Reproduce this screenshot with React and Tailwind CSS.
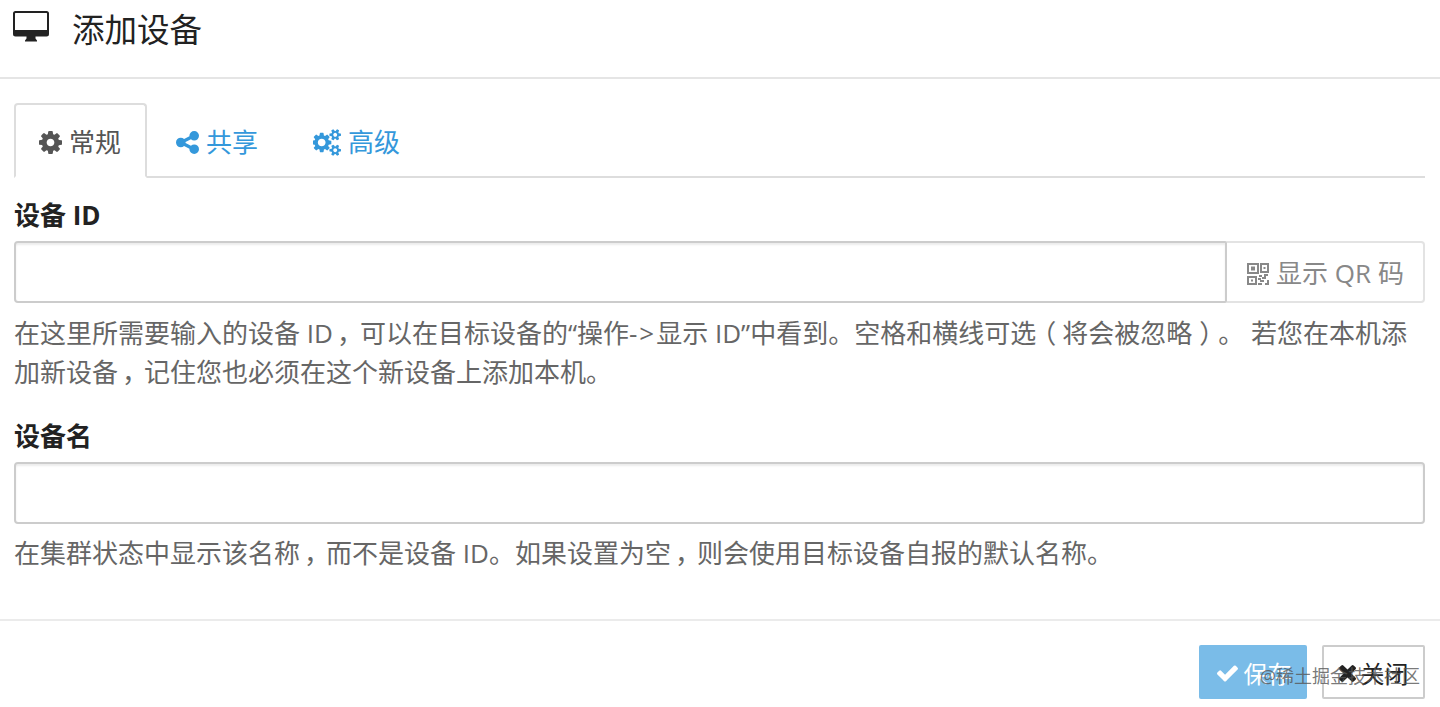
import { useState } from 'react';

const ICONS = {
  cog: 'M1152 896q0-106-75-181t-181-75-181 75-75 181 75 181 181 75 181-75 75-181zm512-109v222q0 12-8 23t-20 13l-185 28q-19 54-39 91 35 50 107 138 10 12 10 25t-9 23q-27 37-99 108t-94 71q-12 0-26-9l-138-108q-44 23-91 38-16 136-29 186-7 28-36 28h-222q-14 0-24.500-8.500t-11.500-21.500l-28-184q-49-16-90-37l-141 107q-10 9-25 9-14 0-25-11-126-114-165-168-7-10-7-23 0-12 8-23 15-21 51-66.500t54-70.500q-27-50-41-99l-183-27q-13-2-21-12.500t-8-23.500v-222q0-12 8-23t19-13l186-28q14-46 39-92-40-57-107-138-10-12-10-24 0-10 9-23 26-36 98.500-107.500t94.500-71.500q13 0 26 10l138 107q44-23 91-38 16-136 29-186 7-28 36-28h222q14 0 24.500 8.500t11.500 21.500l28 184q49 16 90 37l142-107q9-9 24-9 13 0 25 10 129 119 165 170 7 8 7 22 0 12-8 23-15 21-51 66.500t-54 70.500q26 50 41 98l183 28q13 2 21 12.500t8 23.500z',
  share:
    'M1344 1024q133 0 226.500 93.500t93.500 226.500-93.500 226.500-226.500 93.500-226.500-93.500-93.500-226.500q0-12 2-34l-360-180q-92 86-218 86-133 0-226.500-93.500t-93.500-226.500 93.500-226.500 226.500-93.500q126 0 218 86l360-180q-2-22-2-34 0-133 93.500-226.500t226.500-93.500 226.500 93.500 93.500 226.500-93.500 226.500-226.500 93.500q-126 0-218-86l-360 180q2 22 2 34t-2 34l360 180q92-86 218-86z',
  cogs: 'M832 896q0-106-75-181t-181-75-181 75-75 181 75 181 181 75 181-75 75-181zm768 512q0-52-38-90t-90-38-90 38-38 90q0 53 37.500 90.500t90.500 37.500 90.500-37.500 37.500-90.500zm0-1024q0-52-38-90t-90-38-90 38-38 90q0 53 37.500 90.500t90.500 37.500 90.500-37.500 37.500-90.500zm-384 421v185q0 10-7 19.500t-16 10.500l-155 24q-11 35-32 76 34 48 90 115 7 11 7 20 0 12-7 19-23 30-82.500 89.500t-78.500 59.500q-11 0-21-7l-115-90q-37 19-77 31-11 108-23 155-7 24-30 24h-186q-11 0-20-7.500t-10-17.500l-23-153q-34-10-75-31l-118 89q-7 7-20 7-11 0-21-8-144-133-144-160 0-9 7-19 10-14 41-53t47-61q-23-44-35-82l-152-24q-10-1-17-9.500t-7-19.500v-185q0-10 7-19.500t16-10.500l155-24q11-35 32-76-34-48-90-115-7-11-7-20 0-12 7-20 22-30 82-89t79-59q11 0 21 7l115 90q34-18 77-32 11-108 23-154 7-24 30-24h186q11 0 20 7.500t10 17.500l23 153q34 10 75 31l118-89q8-7 20-7 11 0 21 8 144 133 144 160 0 8-7 19-12 16-42 54t-45 60q23 48 34 82l152 23q10 2 17 10.500t7 19.500zm640 533v140q0 16-149 31-12 27-30 52 51 113 51 138 0 4-4 7-122 71-124 71-8 0-46-47t-52-68q-20 2-30 2t-30-2q-14 21-52 68t-46 47q-2 0-124-71-4-3-4-7 0-25 51-138-18-25-30-52-149-15-149-31v-140q0-16 149-31 13-29 30-52-51-113-51-138 0-4 4-7 4-2 35-20t59-34 30-16q8 0 46 46.500t52 67.500q20-2 30-2t30 2q51-71 92-112l6-2q4 0 124 70 4 3 4 7 0 25-51 138 17 23 30 52 149 15 149 31zm0-1024v140q0 16-149 31-12 27-30 52 51 113 51 138 0 4-4 7-122 71-124 71-8 0-46-47t-52-68q-20 2-30 2t-30-2q-14 21-52 68t-46 47q-2 0-124-71-4-3-4-7 0-25 51-138-18-25-30-52-149-15-149-31v-140q0-16 149-31 13-29 30-52-51-113-51-138 0-4 4-7 4-2 35-20t59-34 30-16q8 0 46 46.500t52 67.500q20-2 30-2t30 2q51-71 92-112l6-2q4 0 124 70 4 3 4 7 0 25-51 138 17 23 30 52 149 15 149 31z',
  check:
    'M1671 566q0 40-28 68l-724 724-136 136q-28 28-68 28t-68-28l-136-136-362-362q-28-28-28-68t28-68l136-136q28-28 68-28t68 28l294 295 656-657q28-28 68-28t68 28l136 136q28 28 28 68z',
  times:
    'M1490 1322q0 40-28 68l-136 136q-28 28-68 28t-68-28l-294-294-294 294q-28 28-68 28t-68-28l-136-136q-28-28-28-68t28-68l294-294-294-294q-28-28-28-68t28-68l136-136q28-28 68-28t68 28l294 294 294-294q28-28 68-28t68 28l136 136q28 28 28 68t-28 68l-294 294 294 294q28 28 28 68z',
};

const TABS = [
  { key: 'general', label: '常规', icon: 'cog', box: '128 128 1536 1536', size: 'h-[23px] w-[23px]' },
  { key: 'sharing', label: '共享', icon: 'share', box: '128 128 1536 1536', size: 'h-[23px] w-[23px]' },
  { key: 'advanced', label: '高级', icon: 'cogs', box: '0 0 1856 1792', size: 'h-[27px] w-[28px]' },
];

export default function App() {
  const [tab, setTab] = useState('general');

  return (
    <div
      className="relative h-[707px] w-[1440px] overflow-hidden bg-white text-[26px] leading-[39px] text-[#666]"
      style={{ fontFamily: '"Open Sans", "Noto Sans CJK SC", sans-serif' }}
    >
      <header className="flex h-[79px] items-start border-b-2 border-[#e5e5e5] pl-[13px] pt-[10px] text-[#222]">
        <DesktopIcon />
        <h1 className="ml-[23px] text-[32.5px] leading-[40px]">添加设备</h1>
      </header>

      <main className="h-[542px] border-b-2 border-[#ebebeb] pl-[14px] pr-[15px] pt-[24px]">
        <div role="tablist" className="flex h-[75px] border-b-2 border-[#ddd]">
          {TABS.map(({ key, label, icon, box, size }) => {
            const active = tab === key;
            return (
              <button
                key={key}
                role="tab"
                aria-selected={active}
                onClick={() => setTab(key)}
                className={`mr-1 flex h-[75px] items-center gap-[7px] rounded-t-[4px] border-2 pl-[23px] pr-[24px] pt-[3px] ${
                  active
                    ? 'border-[#ddd] border-b-white bg-white text-[#555]'
                    : 'border-transparent text-[#3498db]'
                }`}
              >
                <Icon name={icon} box={box} className={size} />
                <span>{label}</span>
              </button>
            );
          })}
        </div>

        <label htmlFor="device-id" className="mt-[18px] block font-bold text-[#222]">
          设备 ID
        </label>
        <div className="mt-[6px] flex h-[62px]">
          <input
            id="device-id"
            className="min-w-0 flex-1 rounded-l-[4px] border-2 border-[#ccc] px-6 shadow-[inset_0_2px_2px_rgba(0,0,0,0.075)] outline-none"
          />
          <button className="-ml-0.5 flex w-[200px] items-center justify-center gap-[6px] rounded-r-[4px] border-2 border-l-[#ccc] border-[#e3e3e3] pt-[3px] text-[#888]">
            <QrIcon />
            <span>显示 QR 码</span>
          </button>
        </div>
        <p className="mt-[11px] whitespace-nowrap">
          在这里所需要输入的设备 ID<Comma /><span className="ml-px">可以在目标设备的“操作</span>
          <span className="tracking-[2px]">-&gt;</span>显示 ID”中看到。空格和横线可选<Open />将会被忽略<Close />。 若您在本机添
          <br />
          加新设备<Comma />记住您也必须在这个新设备上添加本机。
        </p>

        <label htmlFor="device-name" className="mt-[25px] block font-bold text-[#222]">
          设备名
        </label>
        <input
          id="device-name"
          className="mt-[6px] block h-[62px] w-full rounded-[4px] border-2 border-[#ccc] px-6 shadow-[inset_0_2px_2px_rgba(0,0,0,0.075)] outline-none"
        />
        <p className="mt-[10px] whitespace-nowrap">
          在集群状态中显示该名称<Comma />而不是设备 ID。如果设置为空<Comma />则会使用目标设备自报的默认名称。
        </p>
      </main>

      <footer className="flex justify-end gap-[15px] pr-[15px] pt-[24px]">
        <button className="flex h-[54px] w-[108px] items-center justify-center gap-[6px] rounded-[2px] bg-[#7abce8] pl-[2px] pt-[2px] text-[24px] text-white">
          <Icon name="check" box="121 334 1550 1188" className="h-[17px] w-[21px]" />
          <span>保存</span>
        </button>
        <button className="flex h-[54px] w-[103px] items-center justify-center gap-[5px] rounded-[2px] border-2 border-[#ccc] pt-[2px] text-[24px] text-[#222]">
          <Icon name="times" box="302 366 1188 1188" className="h-[17px] w-[17px]" />
          <span>关闭</span>
        </button>
      </footer>

      <span className="pointer-events-none absolute right-[20px] top-[662px] whitespace-nowrap text-[18px] leading-[28px] text-[#555]/80">
        @稀土掘金技术社区
      </span>
    </div>
  );
}

// Full-width punctuation, nudged to the middle of its cell.
function Comma() {
  return <span className="inline-block translate-x-[4px]">，</span>;
}

function Open() {
  return <span className="inline-block -translate-x-[6px]">（</span>;
}

function Close() {
  return <span className="inline-block translate-x-[7px]">）</span>;
}

function Icon({ name, box, className }) {
  return (
    <svg viewBox={box} fill="currentColor" className={className} aria-hidden="true">
      <path d={ICONS[name]} />
    </svg>
  );
}

function DesktopIcon() {
  return (
    <svg width="36" height="32" viewBox="0 0 36 32" fill="currentColor" aria-hidden="true">
      <path
        fillRule="evenodd"
        d="M2.500 1h31A2.500 2.500 0 0 1 36 3.500v20.500A2.500 2.500 0 0 1 33.500 26.500H22.500v2l1.500 2v1h-12v-1l1.500-2v-2H2.500A2.500 2.500 0 0 1 0 24v-20.500A2.500 2.500 0 0 1 2.500 1ZM2 3.500V20h32V3.500a.5.5 0 0 0-.5-.5h-31a.5.5 0 0 0-.5.5Z"
      />
    </svg>
  );
}

function QrIcon() {
  return (
    <svg width="24" height="24" viewBox="0 0 24 24" aria-hidden="true">
      <g fill="none" stroke="currentColor" strokeWidth="2">
        <path d="M2 2h10v9H2ZM15 2h7v8h-7ZM2 15h8v7H2Z" />
      </g>
      <path
        fill="currentColor"
        d="M5 4.500h4v4H5ZM17.500 5h2v2h-2ZM5 17.500h2v2H5ZM13 13h3v2h-3ZM18 12h4v2h-2v3h-2ZM12 16h3v2h3v2h-4v-2h-2ZM21 18h2v5h-4v-2h2ZM12 21h4v2h-4ZM16 15h2v2h-2Z"
      />
    </svg>
  );
}
